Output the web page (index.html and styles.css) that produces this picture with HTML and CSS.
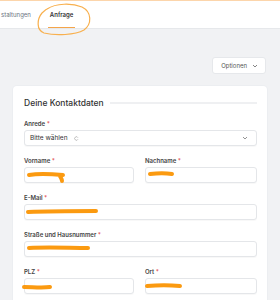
FILE: index.html
```html
<!DOCTYPE html>
<html lang="de">
<head>
  <meta charset="UTF-8">
  <title>Anfrage</title>
  <link rel="stylesheet" href="styles.css">
</head>
<body>
  <div class="topline"></div>
  <header class="tabs">
    <a class="tab">staltungen</a>
    <a class="tab active">Anfrage</a>
  </header>
  <main class="page">
    <div class="toolbar">
      <button class="options">Optionen
        <svg width="6" height="4" viewBox="0 0 6 4"><path d="M1 1l2 2 2-2" fill="none" stroke="#777" stroke-width="0.9"/></svg>
      </button>
    </div>
    <section class="card">
      <h2 class="card-title"><span>Deine Kontaktdaten</span></h2>
      <div class="field">
        <label>Anrede <em>*</em></label>
        <div class="input select">
          <span>Bitte wählen</span>
          <svg class="spin" width="5" height="5" viewBox="0 0 10 10"><path d="M8 3.5A3.5 3.5 0 1 0 8 6.5" fill="none" stroke="#999" stroke-width="1.2"/></svg>
          <svg class="chev" width="6" height="4" viewBox="0 0 6 4"><path d="M1 1l2 2 2-2" fill="none" stroke="#888" stroke-width="0.9"/></svg>
        </div>
      </div>
      <div class="row">
        <div class="field">
          <label>Vorname <em>*</em></label>
          <div class="input"></div>
        </div>
        <div class="field">
          <label>Nachname <em>*</em></label>
          <div class="input"></div>
        </div>
      </div>
      <div class="field">
        <label>E-Mail <em>*</em></label>
        <div class="input"></div>
      </div>
      <div class="field">
        <label>Straße und Hausnummer <em>*</em></label>
        <div class="input"></div>
      </div>
      <div class="row">
        <div class="field">
          <label>PLZ <em>*</em></label>
          <div class="input"></div>
        </div>
        <div class="field">
          <label>Ort <em>*</em></label>
          <div class="input"></div>
        </div>
      </div>
    </section>
  </main>
  <svg class="scribbles" width="280" height="300" viewBox="0 0 280 300">
    <path class="ring" d="M47 9C56 3 72 3 82 7C92 12 92 24 84 30C75 35 56 36 44 33C36 30 37 19 42 13C44 11 46 9 49 8"/>
    <path d="M29 175C40 173 52 174 63 175M60 176C61 178 62 179 62 181"/>
    <path d="M150 174C158 173 166 173 172 174"/>
    <path d="M28 212C50 211 75 211 96 211"/>
    <path d="M29 248C48 247 70 248 88 248"/>
    <path d="M24 287C32 287 42 288 50 287"/>
    <path d="M147 286C158 285 170 285 180 286"/>
  </svg>
</body>
</html>
```
FILE: styles.css
```css
* {
  box-sizing: border-box;
  margin: 0;
  padding: 0;
}
body {
  background: #f1f2f4;
  font-family: Inter, "Noto Sans", sans-serif;
  color: #333;
  width: 280px;
  height: 300px;
  overflow: hidden;
  position: relative;
}
.topline {
  height: 1px;
  background: #fcd5ab;
}
.tabs {
  display: flex;
  gap: 16px;
  height: 28px;
  background: #fff;
  border-bottom: 1px solid #e6e8eb;
}
.tab {
  display: flex;
  align-items: center;
  font-size: 6px;
  color: #6b7280;
  border-bottom: 1px solid transparent;
  padding: 0 1px;
}
.tab.active {
  color: #333;
  font-weight: 600;
  border-bottom-color: #f5a54a;
  padding: 0 2px;
}
.page {
  padding: 28px 13px 0;
}
.toolbar {
  display: flex;
  justify-content: flex-end;
  padding-right: 1px;
}
.options {
  display: flex;
  align-items: center;
  gap: 5px;
  height: 17px;
  padding: 0 7px 0 8px;
  background: #fff;
  border: 1px solid #e6e8eb;
  border-radius: 3px;
  font-family: inherit;
  font-size: 6px;
  color: #555;
}
.card {
  margin-top: 12px;
  background: #fff;
  border-radius: 4px;
  padding: 12px 10px 20px 11px;
  box-shadow: 0 0 0 1px #eceef1;
}
.card-title {
  display: flex;
  align-items: center;
  gap: 6px;
  font-size: 8.5px;
  font-weight: 500;
  color: #333;
  margin-bottom: 12px;
}
.card-title::after {
  content: "";
  flex: 1;
  height: 2px;
  background: #eff0f2;
}
.field {
  display: flex;
  flex-direction: column;
  gap: 2px;
  margin-bottom: 11px;
}
label {
  font-size: 6px;
  font-weight: 600;
  color: #444;
  line-height: 8px;
}
label em {
  font-style: normal;
  color: #e24b4b;
}
.input {
  height: 16px;
  background: #fff;
  border: 1px solid #e4e6e9;
  border-radius: 3px;
  box-shadow: 0 1px 1px rgba(0, 0, 0, 0.03);
}
.select {
  display: flex;
  align-items: center;
  padding: 0 8px 0 5px;
  font-size: 6.5px;
  color: #333;
}
.select .spin {
  margin-left: 6px;
}
.select .chev {
  margin-left: auto;
}
.row {
  display: grid;
  grid-template-columns: 110px 112px;
  gap: 11px;
}
.scribbles {
  position: absolute;
  top: 0;
  left: 0;
  pointer-events: none;
}
.scribbles path {
  fill: none;
  stroke: #fb9a10;
  stroke-width: 4;
  stroke-linecap: round;
}
.scribbles .ring {
  stroke: #f8b04e;
  stroke-width: 1.2;
}
```
